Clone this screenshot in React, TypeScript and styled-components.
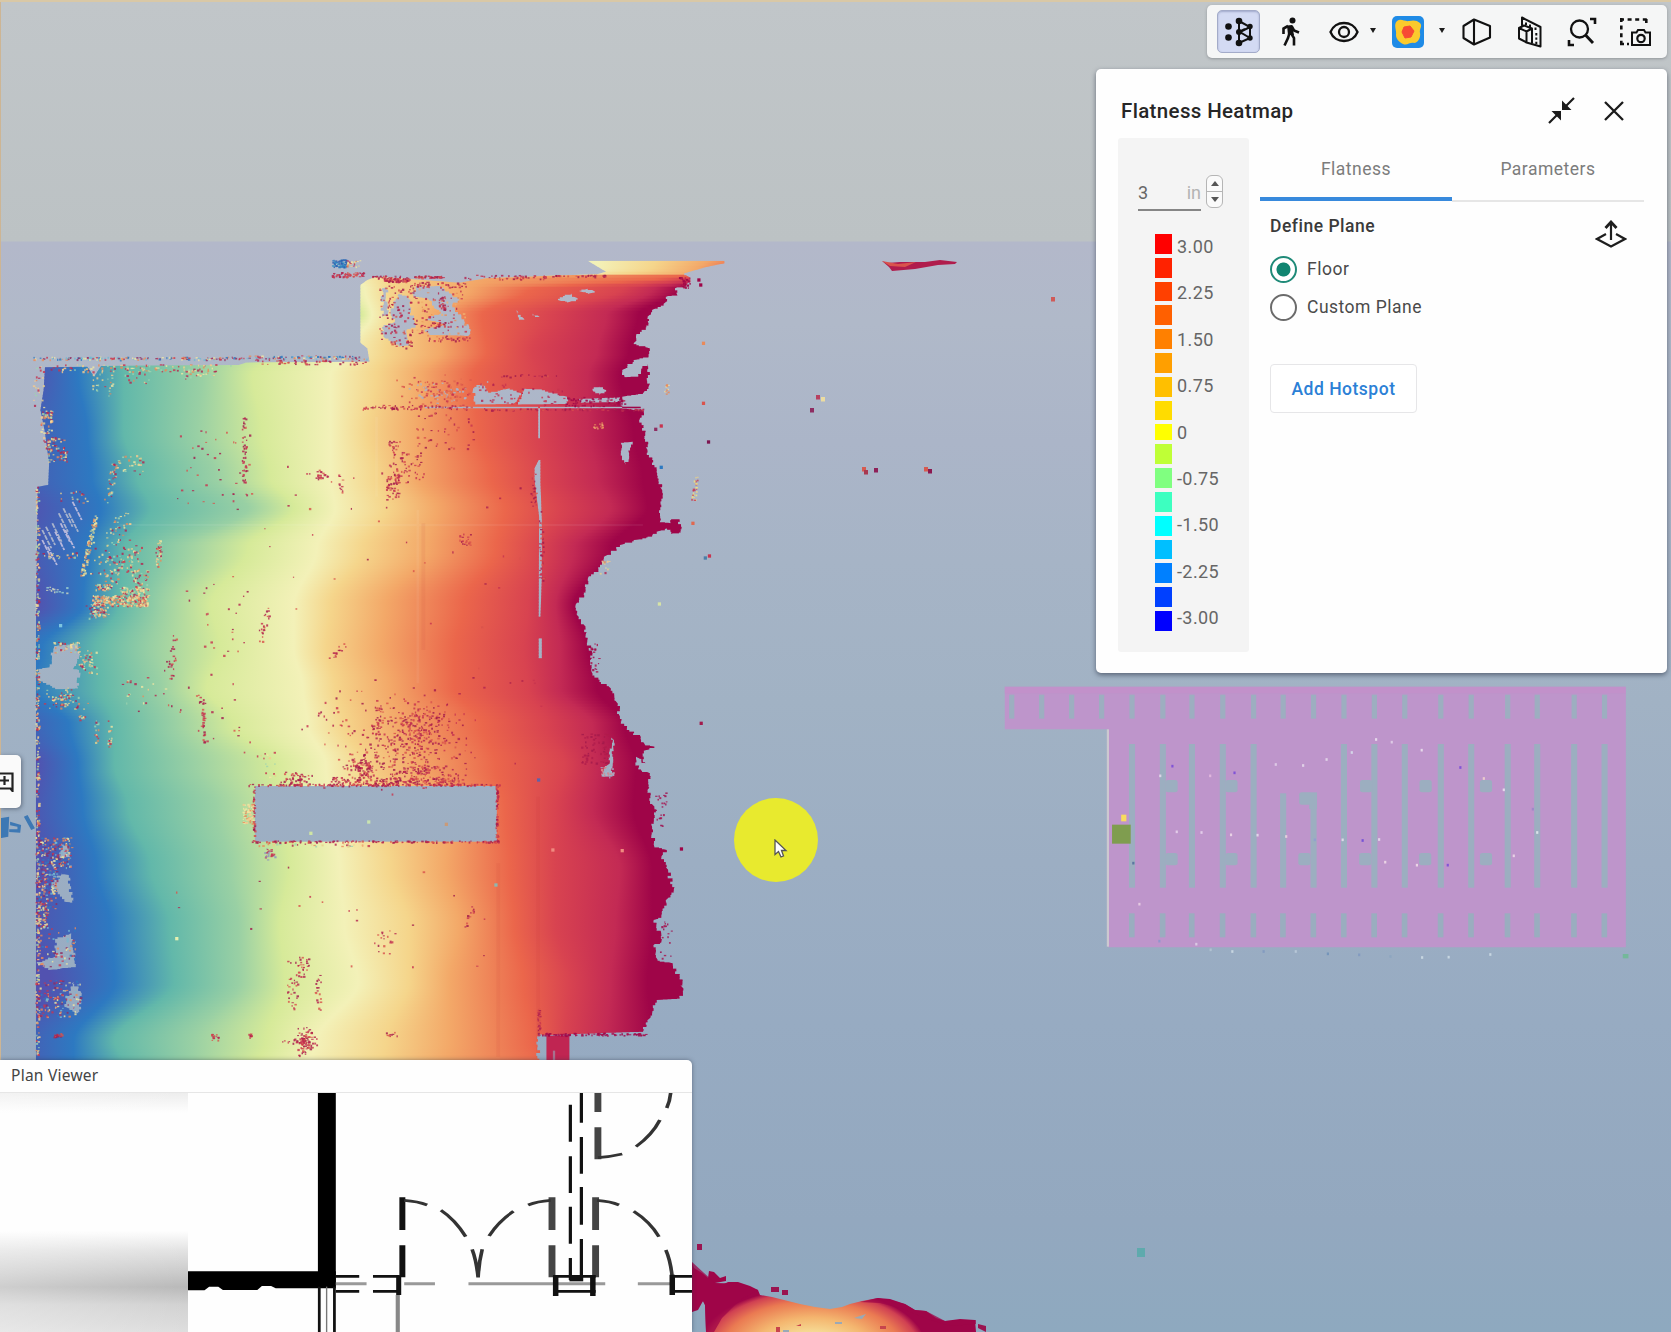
import React from 'react';
import styled, { createGlobalStyle } from 'styled-components';

const GlobalStyle = createGlobalStyle`
  * { box-sizing: border-box; }
  body { margin: 0; overflow: hidden; font-family: Roboto, "Liberation Sans", sans-serif; }
`;

/* ---------- seeded helpers for the scan data ---------- */

type Pt = [number, number];

const seeded = (seed: number) => {
  let s = seed;
  return () => {
    s = (s * 1664525 + 1013904223) % 4294967296;
    return s / 4294967296;
  };
};

const roughen = (pts: Pt[], amount: number, seed: number, from = 0, to = pts.length): string => {
  const r = seeded(seed);
  const out: string[] = [];
  pts.forEach((p, i) => {
    const q = pts[(i + 1) % pts.length];
    out.push(`${p[0]},${p[1]}`);
    if (i < from || i >= to) return;
    const n = Math.floor(Math.hypot(q[0] - p[0], q[1] - p[1]) / 9);
    let lx = p[0];
    for (let k = 1; k <= n; k++) {
      const t = k / (n + 1);
      const x = p[0] + (q[0] - p[0]) * t + (r() - 0.5) * amount;
      const y = p[1] + (q[1] - p[1]) * t;
      out.push(`${lx.toFixed(1)},${y.toFixed(1)}`, `${x.toFixed(1)},${y.toFixed(1)}`);
      lx = x;
    }
  });
  return `M${out.join('L')}Z`;
};

/* ---------- deviation field ---------- */

const RAMP = ['#5252b0', '#2d79c1', '#62b8aa', '#99d0a4', '#d6ea99', '#f3f1b8', '#f5d58b', '#f3a868', '#eb664b', '#d84350', '#c32a54', '#9f0548'];

/* y, then the x at which each colour of the ramp is reached */
const FIELD: number[][] = [
  [85, 500, 560, 620, 680, 740, 1300, 1430, 1540, 1620, 1650, 1680, 1720],
  [112, 500, 560, 620, 680, 740, 1300, 1420, 1520, 1600, 1640, 1680, 1720],
  [126, 500, 560, 620, 680, 740, 1250, 1380, 1510, 1590, 1630, 1660, 1700],
  [138, 500, 560, 620, 680, 740, 780, 850, 1040, 1440, 1500, 1540, 1600],
  [175, 500, 560, 620, 680, 740, 795, 850, 1020, 1150, 1350, 1420, 1480],
  [250, 500, 560, 620, 700, 785, 810, 860, 950, 1050, 1200, 1320, 1390],
  [360, 60, 160, 260, 430, 600, 760, 840, 960, 1060, 1160, 1300, 1370],
  [430, 70, 170, 270, 440, 550, 720, 820, 920, 1030, 1170, 1280, 1350],
  [600, 10, 190, 270, 430, 570, 720, 800, 910, 1040, 1170, 1280, 1380],
  [740, 0, 200, 300, 470, 590, 720, 820, 910, 1070, 1190, 1300, 1400],
  [830, 60, 220, 330, 540, 640, 730, 840, 950, 1100, 1220, 1330, 1410],
  [950, 40, 190, 270, 400, 540, 690, 790, 930, 1080, 1180, 1250, 1330],
  [1120, 80, 180, 260, 350, 460, 640, 720, 840, 1010, 1150, 1210, 1250],
  [1250, -60, 90, 210, 330, 480, 640, 710, 830, 990, 1140, 1220, 1280],
  [1370, -80, 70, 220, 350, 450, 660, 730, 850, 990, 1150, 1220, 1300],
  [1480, 10, 150, 250, 380, 510, 670, 750, 870, 1050, 1190, 1290, 1360],
  [1600, 80, 170, 250, 420, 600, 710, 790, 910, 1080, 1230, 1300, 1385],
  [1730, 60, 180, 280, 470, 620, 720, 820, 980, 1100, 1210, 1290, 1380],
  [1910, 90, 210, 330, 500, 630, 740, 850, 970, 1110, 1210, 1350, 1420],
  [2080, 60, 240, 370, 520, 610, 750, 890, 1000, 1120, 1210, 1340, 1420],
  [2250, 110, 250, 380, 520, 620, 780, 890, 980, 1140, 1240, 1330, 1410],
  [2430, 10, 160, 250, 420, 580, 690, 840, 980, 1160, 1230, 1320, 1420],
  [2500, 20, 160, 270, 420, 560, 670, 830, 970, 1180, 1240, 1320, 1420],
];

const fieldAt = (y: number): number[] => {
  let i = 0;
  while (i < FIELD.length - 2 && FIELD[i + 1][0] < y) i++;
  const a = FIELD[i];
  const b = FIELD[i + 1];
  let t = Math.min(1, Math.max(0, (y - a[0]) / (b[0] - a[0])));
  t = t * t * (3 - 2 * t);
  return a.slice(1).map((v, k) => v + (b[k + 1] - v) * t);
};

const BAND = 9;
const BANDS = Array.from({ length: Math.ceil((2500 - 80) / BAND) }, (_, i) => 80 + i * BAND);

const OUTLINE: Pt[] = [
  [1300, 133], [1320, 125], [1280, 92], [1578, 92], [1578, 100], [1540, 110], [1490, 130], [1502, 142], [1495, 165], [1470, 175], [1475, 195], [1450, 200],
  [1445, 222], [1420, 240], [1410, 260], [1412, 280], [1385, 318], [1380, 340], [1415, 355], [1412, 380], [1380, 390],
  [1355, 420], [1360, 442], [1390, 440], [1410, 400], [1412, 470], [1400, 490], [1355, 500], [1355, 535], [1402, 542],
  [1392, 570], [1405, 610], [1410, 660], [1430, 720], [1442, 780], [1437, 875], [1460, 880], [1462, 868], [1480, 868], [1482, 905],
  [1462, 912], [1450, 893], [1430, 905], [1420, 917], [1380, 930], [1350, 945], [1315, 980], [1303, 1020], [1280, 1045],
  [1275, 1080], [1253, 1125], [1260, 1160], [1275, 1190], [1275, 1215], [1290, 1270], [1285, 1290], [1290, 1330],
  [1330, 1375], [1345, 1420], [1350, 1460], [1365, 1495], [1395, 1520], [1405, 1545], [1425, 1550], [1402, 1562],
  [1405, 1605], [1385, 1580], [1390, 1615], [1415, 1630], [1410, 1680], [1425, 1730], [1420, 1790], [1425, 1850],
  [1452, 1860], [1440, 1880], [1455, 1920], [1467, 1980], [1450, 2010], [1440, 2060], [1423, 2070], [1440, 2110], [1440, 2135],
  [1423, 2145], [1432, 2190], [1465, 2200], [1480, 2240], [1488, 2275], [1480, 2305], [1430, 2310], [1420, 2350], [1410, 2370],
  [1400, 2405], [1180, 2415], [1172, 2410],
  [1172, 2520], [78, 2520], [78, 1230], [82, 770], [105, 765], [107, 700], [97, 600], [88, 540], [95, 480], [98, 412],
  [190, 410], [205, 440], [220, 408], [520, 405], [535, 398], [805, 395], [800, 355], [785, 338], [785, 165], [800, 150], [820, 140], [900, 148], [1000, 158], [1060, 145], [1180, 138],
];

const HOLES: Pt[][] = [
  [[555, 1668], [1082, 1668], [1082, 1835], [555, 1835]],
  [[1030, 480], [1050, 460], [1065, 490], [1110, 475], [1135, 490], [1118, 522], [1035, 524]],
  [[1140, 476], [1180, 478], [1235, 500], [1235, 522], [1128, 524]],
  [[1215, 210], [1245, 190], [1258, 205], [1235, 218]],
  [[1262, 184], [1280, 176], [1295, 184], [1280, 192]],
  [[1125, 240], [1142, 268], [1130, 270]],
  [[1160, 250], [1175, 260], [1165, 262]],
  [[905, 170], [960, 168], [985, 195], [1000, 205], [985, 225], [1005, 260], [1022, 290], [1020, 318], [935, 315], [925, 300], [970, 285], [930, 270], [960, 250], [945, 235], [930, 205], [900, 200]],
  [[850, 250], [870, 190], [890, 200], [895, 240], [905, 290], [885, 300], [890, 345], [868, 350], [835, 320], [832, 295], [860, 275]],
  [[832, 180], [842, 170], [845, 250], [832, 260]],
  [[1290, 480], [1305, 468], [1320, 480], [1305, 495]],
  [[1260, 507], [1350, 502], [1350, 516], [1265, 518]],
  [[1352, 640], [1378, 635], [1370, 670], [1362, 705], [1352, 670]],
  [[925, 530], [1395, 530], [1395, 535], [925, 535]],
  [[1172, 530], [1176, 530], [1176, 625], [1172, 625]],
  [[1173, 690], [1177, 690], [1177, 760], [1180, 870], [1180, 1040], [1177, 1160], [1173, 1160], [1174, 860], [1164, 750], [1164, 715]],
  [[1173, 1225], [1180, 1225], [1180, 1285], [1173, 1285]],
  [[118, 1250], [170, 1240], [172, 1280], [160, 1315], [172, 1320], [170, 1375], [120, 1378], [82, 1350], [84, 1318], [108, 1312]],
  [[1332, 1520], [1337, 1530], [1334, 1640], [1310, 1640], [1328, 1600]],
  [[135, 1930], [150, 1935], [158, 2020], [140, 2015], [112, 1970]],
  [[120, 2130], [155, 2110], [165, 2210], [105, 2220], [80, 2200], [120, 2180]],
  [[160, 2255], [178, 2290], [170, 2355], [140, 2330], [150, 2290]],
  [[135, 1840], [152, 1850], [152, 1880], [130, 1885]],
];

const BODY = [
  roughen(OUTLINE, 9, 7, 6, 94),
  ...HOLES.map((h, i) => (i === 0 || (i > 12 && i < 17) ? `M${h.join('L')}Z` : roughen(h, 8, 31 + i))),
].join(' ');

/* ---------- stray returns ---------- */

const RED = ['#b3234f', '#c8344f', '#a21a4c', '#d9534c'];
const MIX = ['#c8344f', '#f2e7a2', '#e98a5a', '#e9d18a', '#b3234f', '#9fd3b0', '#f6c98d'];
const COOL = ['#2d79c1', '#f2e7a2', '#c8344f', '#74b9d2', '#8e2d62', '#e98a5a'];
const GAP = ['#a9b4cc', '#b8b8dc'];
const WINE = ['#9f0548', '#a90f4a'];

/* n points scattered over a box; k slants the box, soft thins its rim */
interface Cluster { x: number; y: number; w: number; h: number; n: number; c: string[]; k?: number; soft?: boolean }

const CLUSTERS: Cluster[] = [
  { x: 68, y: 380, w: 470, h: 8, n: 150, c: COOL },
  { x: 540, y: 376, w: 258, h: 10, n: 90, c: COOL },
  { x: 540, y: 388, w: 262, h: 14, n: 50, c: RED },
  { x: 110, y: 402, w: 400, h: 22, n: 90, c: MIX },
  { x: 380, y: 415, w: 90, h: 30, n: 30, c: MIX },
  { x: 200, y: 430, w: 45, h: 70, n: 22, c: MIX },
  { x: 270, y: 420, w: 60, h: 40, n: 16, c: MIX },
  { x: 68, y: 400, w: 26, h: 140, n: 22, c: MIX },
  { x: 88, y: 540, w: 24, h: 70, n: 50, c: MIX },
  { x: 92, y: 620, w: 46, h: 75, n: 75, c: MIX, k: 12 },
  { x: 77, y: 770, w: 7, h: 1740, n: 400, c: MIX },
  { x: 722, y: 88, w: 32, h: 22, n: 70, c: ['#2d79c1', '#3c98c4', '#2d5fb0'] },
  { x: 752, y: 90, w: 34, h: 20, n: 26, c: MIX },
  { x: 722, y: 126, w: 70, h: 14, n: 55, c: RED },
  { x: 810, y: 136, w: 80, h: 8, n: 30, c: RED },
  { x: 900, y: 136, w: 68, h: 6, n: 40, c: RED },
  { x: 835, y: 144, w: 55, h: 10, n: 60, c: RED },
  { x: 895, y: 155, w: 120, h: 16, n: 40, c: RED },
  { x: 1010, y: 134, w: 190, h: 14, n: 46, c: RED },
  { x: 1200, y: 134, w: 120, h: 5, n: 30, c: RED },
  { x: 825, y: 160, w: 80, h: 175, n: 90, c: RED },
  { x: 905, y: 165, w: 115, h: 155, n: 90, c: ['#c8344f', '#e98a5a', '#b3234f', '#f0b06e'] },
  { x: 955, y: 200, w: 15, h: 40, n: 25, c: RED },
  { x: 940, y: 276, w: 36, h: 12, n: 20, c: RED },
  { x: 850, y: 330, w: 45, h: 25, n: 18, c: RED },
  { x: 930, y: 316, w: 95, h: 16, n: 26, c: RED },
  { x: 785, y: 524, w: 240, h: 14, n: 75, c: RED },
  { x: 870, y: 440, w: 170, h: 88, n: 130, c: ['#c8344f', '#e0684f', '#d9534c', '#a9b4cc'], soft: true },
  { x: 1040, y: 460, w: 200, h: 66, n: 44, c: ['#c8344f', '#b3234f'] },
  { x: 1080, y: 432, w: 150, h: 8, n: 18, c: RED },
  { x: 1230, y: 500, w: 130, h: 28, n: 70, c: ['#b3234f', '#9f0548'] },
  { x: 1040, y: 535, w: 360, h: 5, n: 70, c: RED },
  { x: 900, y: 545, w: 130, h: 110, n: 40, c: RED },
  { x: 845, y: 630, w: 30, h: 120, n: 40, c: RED },
  { x: 865, y: 650, w: 50, h: 110, n: 36, c: RED, k: 10 },
  { x: 840, y: 730, w: 28, h: 80, n: 50, c: RED },
  { x: 665, y: 718, w: 50, h: 30, n: 22, c: RED },
  { x: 735, y: 730, w: 12, h: 56, n: 9, c: RED },
  { x: 526, y: 560, w: 10, h: 200, n: 46, c: RED },
  { x: 380, y: 600, w: 170, h: 220, n: 36, c: RED },
  { x: 250, y: 675, w: 65, h: 60, n: 28, c: MIX },
  { x: 222, y: 700, w: 16, h: 120, n: 34, c: MIX, k: -20 },
  { x: 172, y: 850, w: 10, h: 190, n: 95, c: ['#f2e7a2', '#c8d79a', '#e98a5a', '#e9d18a'], k: -32 },
  { x: 215, y: 845, w: 40, h: 100, n: 36, c: MIX, k: -40 },
  { x: 200, y: 930, w: 125, h: 140, n: 110, c: MIX, soft: true },
  { x: 338, y: 930, w: 12, h: 80, n: 36, c: MIX },
  { x: 200, y: 1095, w: 120, h: 32, n: 260, c: ['#f2e7a2', '#e98a5a', '#e9d18a', '#f6c98d', '#c8344f'] },
  { x: 205, y: 1060, w: 40, h: 18, n: 40, c: MIX },
  { x: 260, y: 1070, w: 62, h: 26, n: 70, c: MIX },
  { x: 290, y: 1020, w: 34, h: 60, n: 30, c: MIX },
  { x: 190, y: 1122, w: 50, h: 40, n: 60, c: MIX, soft: true },
  { x: 130, y: 780, w: 60, h: 40, n: 18, c: MIX },
  { x: 90, y: 965, w: 80, h: 20, n: 22, c: MIX },
  { x: 100, y: 1070, w: 45, h: 20, n: 14, c: ['#9fd3d0', '#d0d8c0'] },
  { x: 115, y: 1235, w: 58, h: 32, n: 46, c: MIX },
  { x: 170, y: 1260, w: 40, h: 70, n: 40, c: MIX },
  { x: 85, y: 1375, w: 90, h: 60, n: 70, c: MIX, k: 15, soft: true },
  { x: 165, y: 1455, w: 25, h: 16, n: 12, c: MIX },
  { x: 205, y: 1470, w: 8, h: 70, n: 16, c: MIX },
  { x: 234, y: 1470, w: 8, h: 80, n: 16, c: MIX },
  { x: 260, y: 1350, w: 100, h: 70, n: 18, c: MIX },
  { x: 350, y: 1200, w: 25, h: 150, n: 26, c: RED, k: -28 },
  { x: 432, y: 1400, w: 10, h: 140, n: 30, c: RED, k: 8 },
  { x: 360, y: 1340, w: 160, h: 190, n: 22, c: RED },
  { x: 555, y: 1140, w: 14, h: 100, n: 22, c: RED, k: -20 },
  { x: 440, y: 1080, w: 100, h: 200, n: 18, c: RED },
  { x: 700, y: 1225, w: 20, h: 70, n: 14, c: RED, k: -50 },
  { x: 640, y: 1380, w: 150, h: 110, n: 18, c: RED },
  { x: 740, y: 1440, w: 270, h: 240, n: 260, c: RED, soft: true },
  { x: 840, y: 1390, w: 150, h: 190, n: 170, c: RED, soft: true },
  { x: 755, y: 1570, w: 60, h: 85, n: 90, c: RED, soft: true },
  { x: 850, y: 1590, w: 160, h: 75, n: 90, c: RED, soft: true },
  { x: 806, y: 1430, w: 16, h: 90, n: 26, c: RED, k: -10 },
  { x: 720, y: 1640, w: 290, h: 26, n: 180, c: RED },
  { x: 615, y: 1625, w: 60, h: 40, n: 46, c: RED, soft: true },
  { x: 540, y: 1661, w: 550, h: 5, n: 130, c: RED },
  { x: 550, y: 1665, w: 4, h: 170, n: 40, c: RED },
  { x: 1079, y: 1665, w: 4, h: 170, n: 60, c: RED },
  { x: 545, y: 1831, w: 540, h: 5, n: 120, c: RED },
  { x: 545, y: 1840, w: 270, h: 8, n: 30, c: MIX },
  { x: 528, y: 1720, w: 22, h: 60, n: 60, c: ['#f6c98d', '#f2e7a2', '#e98a5a'] },
  { x: 572, y: 1850, w: 26, h: 35, n: 26, c: ['#c8344f', '#8d92c0'], soft: true },
  { x: 555, y: 1550, w: 45, h: 90, n: 14, c: MIX },
  { x: 82, y: 1822, w: 73, h: 90, n: 150, c: COOL },
  { x: 82, y: 1910, w: 45, h: 130, n: 130, c: COOL },
  { x: 82, y: 2030, w: 20, h: 60, n: 46, c: MIX },
  { x: 84, y: 2090, w: 80, h: 120, n: 60, c: COOL },
  { x: 84, y: 2250, w: 90, h: 110, n: 120, c: COOL },
  { x: 115, y: 2410, w: 20, h: 10, n: 16, c: RED },
  { x: 625, y: 2190, w: 24, h: 150, n: 30, c: RED },
  { x: 685, y: 2230, w: 14, h: 110, n: 18, c: RED },
  { x: 648, y: 2180, w: 24, h: 60, n: 26, c: RED },
  { x: 645, y: 2395, w: 40, h: 80, n: 90, c: RED, soft: true },
  { x: 612, y: 2425, w: 70, h: 14, n: 20, c: RED },
  { x: 457, y: 2410, w: 18, h: 20, n: 14, c: RED },
  { x: 540, y: 2410, w: 10, h: 12, n: 10, c: RED },
  { x: 815, y: 2100, w: 45, h: 80, n: 16, c: RED },
  { x: 840, y: 2405, w: 26, h: 14, n: 9, c: RED },
  { x: 1005, y: 2020, w: 10, h: 70, n: 12, c: RED, k: -24 },
  { x: 1000, y: 905, w: 24, h: 40, n: 20, c: RED },
  { x: 1155, y: 730, w: 12, h: 100, n: 26, c: RED },
  { x: 1173, y: 830, w: 10, h: 220, n: 40, c: RED },
  { x: 1265, y: 1510, w: 60, h: 90, n: 60, c: ['#b01c4c', '#a21a4c'] },
  { x: 1305, y: 1610, w: 30, h: 30, n: 26, c: ['#a9b4cc', '#d8858a'] },
  { x: 1290, y: 575, w: 22, h: 22, n: 14, c: ['#e98a5a', '#f0b06e'] },
  { x: 1170, y: 2335, w: 5, h: 80, n: 36, c: RED },
  { x: 1180, y: 2408, w: 225, h: 7, n: 80, c: WINE },
  { x: 1425, y: 1680, w: 26, h: 110, n: 20, c: WINE },
  { x: 1425, y: 2070, w: 42, h: 130, n: 18, c: WINE },
  { x: 1285, y: 1235, w: 20, h: 90, n: 18, c: WINE },
  { x: 1505, y: 740, w: 8, h: 70, n: 24, c: ['#f2e37f', '#c8344f', '#e9d18a'], k: -6 },
  { x: 1446, y: 458, w: 8, h: 34, n: 12, c: ['#f2e7a2', '#e98a5a'] },
  { x: 1305, y: 990, w: 20, h: 40, n: 12, c: MIX },
  { x: 1478, y: 138, w: 24, h: 34, n: 30, c: WINE },
  { x: 200, y: 1300, w: 1000, h: 340, n: 30, c: RED },
  { x: 350, y: 640, w: 800, h: 560, n: 44, c: RED },
  { x: 350, y: 1880, w: 800, h: 380, n: 22, c: RED },
];

/* single echoes in empty space: x, y, colour */
const ECHOES: [number, number, string][] = [
  [1532, 340, '#e98a5a'], [1532, 520, '#d9534c'], [1543, 636, '#7d1650'], [1440, 588, '#c8344f'], [1428, 598, '#8e2d62'],
  [1440, 712, '#2d79c1'], [1509, 880, '#e0684f'], [1545, 978, '#c8344f'], [1536, 984, '#4b7fa8'], [1527, 1480, '#a21a4c'],
  [1436, 1122, '#d6e3a6'], [1484, 1857, '#9f0548'], [1526, 165, '#9f0548'], [1522, 150, '#9f0548'], [803, 1776, '#c9e3b0'],
  [677, 1810, '#cfe5a4'], [972, 1783, '#c99a78'], [1173, 1650, '#5f62a8'], [1080, 1965, '#8fb7b0'], [1204, 1860, '#f08a80'],
  [1355, 1862, '#f08a80'], [385, 2126, '#e6f0b0'], [132, 1187, '#7cc4e0'],
];

const r0 = seeded(99);
const spread = (soft?: boolean) => (soft ? (r0() + r0() + r0()) / 3 * 1.4 - 0.2 : r0());

const SPECKS = CLUSTERS.map(cl =>
  Array.from({ length: cl.n }, () => {
    const k = cl.k ?? 0;
    const ty = spread(cl.soft);
    const slant = k < 0 ? -k * (1 - ty) : k * ty;
    return {
      x: cl.x + spread(cl.soft) * cl.w + slant,
      y: cl.y + ty * cl.h,
      w: 2.6 + r0() * 3,
      h: 3 + r0() * 3.8,
      f: cl.c[Math.floor(r0() * cl.c.length)],
    };
  }),
).flat();

const DECK: Pt[] = [
  [692, 1262], [694, 1268], [702, 1273], [708, 1278], [709, 1271], [714, 1272], [720, 1278], [726, 1276], [726, 1281], [715, 1283], [724, 1284],
  [728, 1282], [738, 1282], [750, 1286], [758, 1290], [760, 1295], [772, 1297], [788, 1301], [800, 1304], [815, 1307], [830, 1309],
  [842, 1307], [850, 1304], [862, 1301], [878, 1298], [890, 1299], [905, 1304], [915, 1310], [926, 1311], [936, 1318], [945, 1321],
  [960, 1319], [975, 1320], [976, 1332], [706, 1332], [705, 1305], [703, 1301], [698, 1310], [692, 1312],
];

const ScanLayer = styled.svg`
  position: absolute;
  inset: 0;
  width: 1671px;
  height: 1332px;
`;

const HATCH: Pt[] = [[92, 900], [92, 930], [100, 890], [104, 950], [114, 880], [120, 905], [128, 850], [132, 880], [138, 835], [142, 900], [150, 850], [158, 815]];

const AISLES = [327, 398, 465, 536, 607, 675, 745, 815, 885, 955, 1038, 1108, 1192, 1260, 1345, 1415];
const STUBS = [50, 119, 188, 257];
const KNOBS: Pt[] = [[418, 348], [556, 348], [866, 348], [1003, 348], [1142, 348], [726, 385], [418, 567], [556, 567], [724, 567], [864, 567], [1002, 567], [1142, 567]];
const DOTS: [number, number, string][] = [
  [420, 289, '#7748d8'], [563, 309, '#7748d8'], [1083, 293, '#7748d8'], [858, 512, '#6a48d8'], [1054, 586, '#7748d8'], [330, 580, '#4f6f9a'],
  [392, 318, '#e6dcec'], [507, 318, '#e6bce0'], [658, 284, '#e3d2ea'], [721, 287, '#e6dcec'], [775, 269, '#e6dcec'], [833, 248, '#d8e0ec'],
  [889, 209, '#ece4f0'], [925, 217, '#e3d2ea'], [994, 241, '#ece4f0'], [1137, 326, '#f3d6cc'], [1183, 360, '#ece4f0'], [1250, 418, '#9b85c8'],
  [1260, 488, '#e6ecf0'], [430, 486, '#e9d6ee'], [487, 488, '#e9d6ee'], [555, 495, '#f0dcea'], [616, 496, '#e9e0ee'], [682, 500, '#f0d8e0'],
  [748, 510, '#8f9fd0'], [812, 510, '#e9e0ee'], [896, 509, '#e9e0ee'], [910, 577, '#f3dfea'], [983, 586, '#f3dfea'], [1206, 558, '#f0dcea'],
  [344, 703, '#ecd2e6'], [390, 814, '#8b96cc'], [475, 823, '#dfd2e8'], [558, 845, '#cfdde6'], [508, 840, '#b5c5d4'], [630, 845, '#7f98c0'],
  [704, 845, '#bccbda'], [778, 852, '#6f90b8'], [850, 855, '#7f98c0'], [922, 860, '#8ba4c0'], [995, 863, '#cfdde6'], [1056, 862, '#cfdde6'],
  [1152, 854, '#cfdde6'],
];

/* far returns on the right of the slab, in screen pixels */
const FAR: [number, number, string][] = [
  [1053, 299, '#d05a58'], [818, 397, '#b84060'], [823, 399, '#ecdca0'], [812, 410, '#8e2d62'], [864, 469, '#d65a50'],
  [866, 472, '#a83850'], [876, 470, '#8e2058'], [926, 469, '#d65a50'], [930, 471, '#8b1850'],
];

const PointCloud = () => (
  <ScanLayer viewBox="0 0 1671 1332">
    <defs>
      <clipPath id="slab">
        <path d={BODY} clipRule="evenodd" />
      </clipPath>
      {BANDS.map(y => (
        <linearGradient key={y} id={`b${y}`} gradientUnits="userSpaceOnUse" x1="-100" x2="1700" y1="0" y2="0">
          {fieldAt(y).map((x, i) => (
            <stop key={i} offset={(x + 100) / 1800} stopColor={RAMP[i]} />
          ))}
        </linearGradient>
      ))}
      <radialGradient id="deck" gradientUnits="userSpaceOnUse" cx="812" cy="1350" r="100" gradientTransform="translate(812 1350) scale(1.15 .62) translate(-812 -1350)">
        <stop offset=".25" stopColor="#f6e09a" />
        <stop offset=".52" stopColor="#f4b66f" />
        <stop offset=".78" stopColor="#ea7a52" />
        <stop offset=".93" stopColor="#d04052" />
        <stop offset="1" stopColor="#9f0548" />
      </radialGradient>
    </defs>
    <g transform="translate(0 230) scale(.4592 .33333)">
      <g clipPath="url(#slab)">
        {BANDS.map(y => (
          <rect key={y} x="70" y={y} width="1530" height={BAND + 3} fill={`url(#b${y})`} />
        ))}
        <path d="M260 885H1400M910 840V1360M820 560V800" stroke="#fff" strokeOpacity=".06" strokeWidth="6" />
        <path d="M922 880V1260M1085 1900V2480M1172 1700V2480" stroke="#c03030" strokeOpacity=".08" strokeWidth="8" />
      </g>
      <rect x="1190" y="2417" width="50" height="100" fill="#c02552" />
      <rect x="1204" y="2462" width="5" height="40" fill="#a8728f" />
      {HATCH.map(([x, y], i) => (
        <path key={i} d={`M${x} ${y}l20 55`} stroke={GAP[i % 2]} strokeWidth="4" strokeDasharray="14 3" />
      ))}
      {SPECKS.map((s, i) => (
        <rect key={i} x={s.x} y={s.y} width={s.w} height={s.h} fill={s.f} fillOpacity=".82" />
      ))}
      {ECHOES.map(([x, y, f], i) => (
        <rect key={i} x={x - 3.5} y={y - 5} width="7" height="10" fill={f} />
      ))}
      <path d="M0 1765L20 1760L18 1820L0 1825ZM22 1775L46 1785L44 1808L20 1806L20 1798L38 1798L38 1790L22 1786ZM52 1760L60 1755L76 1795L68 1800Z" fill="#3d78b4" />
    </g>
    <path d="M882 261L887 263L900 262L925 262L940 260L957 262L955 264L938 265L915 269L892 271L889 267Z" fill="#b01c4c" />
    <path d="M882 261L898 264L916 262L905 267L890 266Z" fill="#d9534c" />
    {FAR.map(([x, y, f]) => (
      <rect key={`${x}-${y}`} x={x - 2} y={y - 2} width="4" height="4.5" fill={f} />
    ))}

    <g transform="translate(990 670) scale(.43431 .33333)">
      <path d="M34 50H1464V832H272V178H34Z" fill="#be95cb" />
      <path d="M34 50H1464V70H34Z" fill="#c58fca" opacity=".6" />
      <rect x="269" y="178" width="5" height="652" fill="#cdc8d0" />
      {[...STUBS, ...AISLES].map(x => <rect key={x} x={x - 6} y="74" width="12" height="72" fill="#9daec0" />)}
      {AISLES.map(x => {
        const top = x === 675 || x === 745 ? 370 : 222;
        return <rect key={x} x={x - 7} y={top} width="14" height={653 - top} fill="#9caec0" />;
      })}
      {AISLES.map(x => <rect key={x} x={x - 7} y="730" width="13" height="72" fill="#9aadbf" />)}
      {KNOBS.map(([x, y]) => <rect key={`${x}-${y}`} x={x - 14} y={y - 18} width="28" height="37" rx="6" fill="#9caec0" />)}
      <rect x="735" y="367" width="18" height="50" fill="#9caec0" />
      {DOTS.map(([x, y, f], i) => <rect key={i} x={x - 2.5} y={y - 4.5} width="5" height="8" fill={f} opacity=".85" />)}
      <rect x="302" y="434" width="12" height="20" fill="#f8dc5e" />
      <rect x="281" y="464" width="43" height="57" fill="#7f9d4f" />
      <rect x="1457" y="852" width="13" height="13" fill="#74b89a" />
    </g>

    <path d={`M${DECK.join('L')}Z`} fill="url(#deck)" />
    <path d="M692 1262L715 1283L736 1283L758 1290L740 1300L722 1318L714 1332H706L705 1305L703 1301L692 1312ZM860 1302L878 1298L905 1304L915 1310L926 1311L945 1321L976 1320V1324L950 1326L925 1318L900 1308L880 1303Z" fill="#9f0548" opacity=".75" />
    <path d="M697 1244h5v6h-5zM771 1287h8v5h-8zM782 1290h6v5h-6zM978 1324l8 2v6l-8-4z" fill="#9a1450" />
    <path d="M854 1318l12-4-4 5zM835 1322h7v2h-7zM783 1330h6v2h-6z" fill="#9aa9b6" />
    <path d="M776 1327h4v5h-4zM796 1326l5-2v2zM880 1326h6v3h-6z" fill="#c8444c" />
    <rect x="1137" y="1248" width="8" height="9" fill="#5faaad" />
  </ScanLayer>
);

/* ---------- viewport ---------- */

const Viewport = styled.main`
  position: relative;
  width: 1671px;
  height: 1332px;
  overflow: hidden;
  border-top: 2px solid #d9c8a6;
  background: linear-gradient(
    180deg,
    #c1c6c9 0, #bcc2c4 239px, #b3b8ca 240px, #b0b9c9 320px, #abb5c8 440px,
    #a6b4c6 560px, #a1b2c4 700px, #9caec3 860px, #97abc2 1020px, #93a8bf 1220px, #8ea9bf 1330px
  );
`;

const EdgeLine = styled.i`
  position: absolute;
  left: 0;
  top: 0;
  width: 1px;
  height: 1060px;
  background: #cdb594;
`;

const CloudShift = styled.div`
  position: absolute;
  inset: -2px 0 0 0;
`;

const Dock = styled.aside`
  position: absolute;
  top: 3px;
  right: 4px;
  display: flex;
  flex-direction: column;
  align-items: flex-end;
  gap: 11px;
`;

/* ---------- toolbar ---------- */

const Toolbar = styled.div`
  display: flex;
  align-items: center;
  width: 460px;
  height: 53px;
  padding-left: 10px;
  border-radius: 5px;
  background: #f5f6f6;
  box-shadow: 0 1px 3px rgba(60, 64, 68, 0.35);
`;

const ToolButton = styled.button<{ $w: number; $active?: boolean }>`
  display: flex;
  align-items: center;
  justify-content: center;
  flex: none;
  width: ${p => p.$w}px;
  height: 43px;
  padding: 0;
  border: 1.5px solid ${p => (p.$active ? '#a3abc9' : 'transparent')};
  border-radius: 5px;
  background: ${p => (p.$active ? '#d3daf3' : 'transparent')};
  box-shadow: ${p => (p.$active ? 'inset 0 1px 2px rgba(70, 80, 130, 0.35)' : 'none')};
  color: #111;
`;

const Caret = styled.i<{ $ml?: number }>`
  flex: none;
  width: 0;
  height: 0;
  margin-bottom: 3px;
  margin-left: ${p => p.$ml ?? 0}px;
  border: 3px solid transparent;
  border-top: 5px solid #1c1c1c;
  border-bottom: 0;
`;

const Glyph = styled.svg`
  display: block;
  flex: none;
  fill: none;
  stroke: currentColor;
`;

/* ---------- heatmap panel ---------- */

const Panel = styled.section`
  width: 571px;
  height: 604px;
  padding: 0 23px 0 22px;
  border-radius: 5px;
  background: #fefefe;
  box-shadow: 0 2px 5px rgba(40, 48, 66, 0.6);
`;

const PanelHeader = styled.header`
  display: flex;
  align-items: center;
  height: 69px;
  padding: 14px 20px 0 3px;
`;

const PanelTitle = styled.h2`
  flex: 1;
  margin: 0;
  font-size: 20.5px;
  font-weight: 500;
  letter-spacing: 0.35px;
  color: #262626;
`;

const IconButton = styled.button<{ $ml?: number }>`
  padding: 0;
  margin: 0 0 0 ${p => p.$ml ?? 0}px;
  border: 0;
  background: none;
  color: #1b1b1b;
`;

const PanelBody = styled.div`
  display: flex;
  gap: 11px;
`;

const Legend = styled.div`
  width: 131px;
  height: 514px;
  padding: 37px 0 0 20px;
  border-radius: 3px;
  background: #f4f4f4;
  color: #666;
`;

const RangeRow = styled.div`
  display: flex;
  align-items: flex-start;
  gap: 5px;
  height: 59px;
`;

const RangeField = styled.div`
  display: flex;
  justify-content: space-between;
  align-items: center;
  width: 63px;
  height: 36px;
  border-bottom: 2px solid #858585;
  font-size: 18px;
`;

const Unit = styled.span`
  color: #b3b3b3;
`;

const Stepper = styled.div`
  display: flex;
  flex-direction: column;
  width: 17px;
  height: 33px;
  border: 1.4px solid #b5b5b5;
  border-radius: 6px;
  background: #fafafa;
`;

const Step = styled.span<{ $down?: boolean }>`
  flex: 1;
  display: flex;
  align-items: center;
  justify-content: center;
  border-top: ${p => (p.$down ? '1px solid #b5b5b5' : '0')};
  &::before {
    content: '';
    border: 4.5px solid transparent;
    border-${p => (p.$down ? 'top' : 'bottom')}: 5px solid #555;
    border-${p => (p.$down ? 'bottom' : 'top')}: 0;
  }
`;

const Scale = styled.div`
  display: flex;
  gap: 5px;
  padding-left: 17px;
`;

const Swatches = styled.div`
  display: flex;
  flex-direction: column;
  gap: 4px;
  width: 17px;
`;

const Swatch = styled.i<{ $c: string; $mid?: boolean }>`
  height: ${p => (p.$mid ? 16 : 19.8)}px;
  background: ${p => p.$c};
`;

const Ticks = styled.div`
  display: flex;
  flex-direction: column;
  padding-top: 2px;
`;

const Tick = styled.span`
  height: 46.4px;
  line-height: 21px;
  font-size: 18px;
  letter-spacing: 0.4px;
`;

const Content = styled.div`
  flex: 1;
  color: #4a4a4a;
`;

const TabRow = styled.div`
  display: flex;
  width: 384px;
  height: 64px;
`;

const Tab = styled.div<{ $on?: boolean }>`
  flex: 1;
  display: flex;
  justify-content: center;
  padding-top: 20px;
  font-size: 17.5px;
  line-height: 22px;
  letter-spacing: 0.5px;
  color: #7c7c7c;
  background: ${p => (p.$on ? 'linear-gradient(#3789dc, #3789dc) 0 59px / 100% 4px no-repeat' : 'linear-gradient(#e6e6e6, #e6e6e6) 0 62px / 100% 2px no-repeat')};
`;

const Section = styled.div`
  display: flex;
  justify-content: space-between;
  align-items: flex-start;
  padding: 13px 17px 0 10px;
  height: 48px;
`;

const SectionTitle = styled.h3`
  margin: 0;
  font-size: 17.5px;
  line-height: 22px;
  font-weight: 500;
  letter-spacing: 0.5px;
  color: #3a3a3a;
`;

const Option = styled.label`
  display: flex;
  align-items: center;
  gap: 10px;
  height: 38px;
  padding-left: 10px;
  font-size: 17.5px;
  letter-spacing: 0.5px;
`;

const Dot = styled.i<{ $on?: boolean }>`
  width: 27px;
  height: 27px;
  border-radius: 50%;
  border: 2.5px solid ${p => (p.$on ? '#1f8a78' : '#6b6b6b')};
  background: ${p => (p.$on ? 'radial-gradient(circle, #118571 6.6px, #fff 7.4px)' : '#fff')};
`;

const HotspotButton = styled.button`
  display: block;
  width: 147px;
  height: 49px;
  margin: 38px 0 0 10px;
  border: 1px solid #e6e6e8;
  border-radius: 4px;
  background: #fff;
  font: 500 17.5px Roboto, sans-serif;
  letter-spacing: 0.5px;
  color: #2b80d6;
`;

const LiftIcon = styled(Glyph)`
  margin-top: 5px;
  color: #1e1e1e;
`;

const SWATCHES = ['#ff0000', '#ff2200', '#ff4000', '#ff6000', '#ff8000', '#ff9f00', '#ffbf00', '#ffdc00', '#ffff00', '#bfff36', '#80ff80', '#3dffc0', '#00ffff', '#00bfff', '#0080ff', '#0040ff', '#0000ff'];
const TICKS = ['3.00', '2.25', '1.50', '0.75', '0', '-0.75', '-1.50', '-2.25', '-3.00'];

/* ---------- side tab, plan viewer, pointer ---------- */

const SideTab = styled.button`
  position: absolute;
  left: 0;
  top: 753px;
  width: 21px;
  height: 53px;
  padding: 0;
  border: 0;
  border-radius: 0 5px 5px 0;
  background: #fafafa;
  box-shadow: 1px 1px 4px rgba(40, 48, 66, 0.5);
  color: #222;
`;

const PlanWindow = styled.section`
  position: absolute;
  left: 0;
  bottom: 0;
  width: 692px;
  height: 272px;
  border-radius: 0 5px 0 0;
  overflow: hidden;
  background: #fefefe;
  box-shadow: 0 0 4px rgba(40, 48, 66, 0.5);
`;

const PlanTitle = styled.header`
  height: 33px;
  padding-left: 11px;
  line-height: 31px;
  border-bottom: 1px solid #e6e6e6;
  font-family: "Noto Sans", sans-serif;
  font-size: 15.5px;
  letter-spacing: 0.25px;
  color: #444;
`;

const PlanRow = styled.div`
  display: flex;
  height: 239px;
`;

const PlanFade = styled.div`
  width: 188px;
  background:
    linear-gradient(90deg, rgba(255, 255, 255, 0.3), transparent),
    linear-gradient(180deg, #ededed 0, #fbfbfb 16px, #fefefe 20px, #fefefe 138px, #e2e2e2 158px, #cccccc 178px, #b9b9b9 194px, #d2d2d2 212px, #dedede 239px);
`;

const PlanDrawing = styled.svg`
  display: block;
  width: 504px;
  height: 239px;
  filter: blur(0.6px);
`;

const Pointer = styled.div`
  position: absolute;
  left: 734px;
  top: 796px;
  width: 84px;
  height: 84px;
  padding: 41px 0 0 40px;
  border-radius: 50%;
  background: #e8ea2e;
`;

export default function App() {
  return (
    <>
      <GlobalStyle />
      <Viewport>
        <CloudShift><PointCloud /></CloudShift>
        <EdgeLine />

        <Dock>
          <Toolbar>
            <ToolButton $w={43} $active>
              <Glyph width="30" height="30" viewBox="0 0 30 30" strokeWidth="2">
                <path d="M15 4L26 10V21L15 26ZM15 4V26M26 10L16 15L26 21M15 15L21 12" />
                <g fill="#111" stroke="none">
                  <circle cx="15" cy="4" r="3.3" /><circle cx="15" cy="15" r="3" /><circle cx="15" cy="26" r="3.3" />
                  <circle cx="26" cy="9.5" r="2.7" /><circle cx="26" cy="21" r="2.7" /><circle cx="4.5" cy="9.5" r="3.3" /><circle cx="4.5" cy="20.5" r="3.3" />
                </g>
              </Glyph>
            </ToolButton>
            <ToolButton $w={62}>
              <Glyph width="22" height="30" viewBox="0 0 22 30" strokeWidth="2.6">
                <circle cx="12.5" cy="3.5" r="3" fill="#111" stroke="none" />
                <path d="M7 8.5L12 8L14 18H8Z" fill="#111" stroke="none" />
                <path d="M8 9L3.5 11.5V17M11.5 9L14 13.5L19 15.5M9.5 16L8 21L4.5 28.5M11.5 17L14 21V28.5" />
              </Glyph>
            </ToolButton>
            <ToolButton $w={43}>
              <Glyph width="30" height="22" viewBox="0 0 30 22" strokeWidth="2.3">
                <path d="M1.5 11C6 -1 24 -1 28.5 11C24 23 6 23 1.5 11Z" /><circle cx="15" cy="11" r="5" />
              </Glyph>
            </ToolButton>
            <Caret $ml={5} />
            <ToolButton $w={63}>
              <Glyph width="32" height="32" viewBox="0 0 32 32">
                <rect width="32" height="32" rx="5" fill="#1f8be6" stroke="none" />
                <path d="M5 5C9 2 13 6 17 5C21 4 25 4 28 7C31 10 27 13 28 17C29 21 26 27 22 27C18 26 15 30 11 28C7 26 4 23 4 19C5 14 1 9 5 5Z" fill="#fbca2d" stroke="none" />
                <path d="M12 11L18 10L22 15L19 21L13 22L10 16Z" fill="#f74a34" stroke="#f74a34" strokeLinejoin="round" />
              </Glyph>
            </ToolButton>
            <Caret />
            <ToolButton $w={63}>
              <Glyph width="30" height="28" viewBox="0 0 30 28" strokeWidth="2.1" strokeLinejoin="round">
                <path d="M12 1.5L28 8V19.5L12 26.5L1.5 20V8ZM12 1.5V26.5" />
              </Glyph>
            </ToolButton>
            <ToolButton $w={42}>
              <Glyph width="25" height="32" viewBox="0 0 25 32" strokeWidth="2" strokeLinejoin="round">
                <path d="M5 9.5V1.5L23.5 11V30.5L9.5 26.5L2 22.5V12L7 9.5L15 12.5V27M2 12L9.5 15.5L15 12.5M9.5 15.5V26.5" />
                <path d="M9 6.5v3M13 8.5v3M18.5 11.5v3M19.3 17v12" strokeDasharray="2.4 2" />
              </Glyph>
            </ToolButton>
            <ToolButton $w={63}>
              <Glyph width="30" height="30" viewBox="0 0 30 30" strokeWidth="2.3">
                <circle cx="12.5" cy="12" r="8.5" /><path d="M18.5 18L26 26" strokeWidth="2.9" />
                <path d="M23 2H28V7M2 23V28H7" strokeWidth="2.6" />
              </Glyph>
            </ToolButton>
            <ToolButton $w={43}>
              <Glyph width="32" height="30" viewBox="0 0 32 30" strokeWidth="2.6">
                <path d="M1 2.5H28" strokeDasharray="4 3.6" /><path d="M2.3 1V28M27.3 2V8" strokeDasharray="4 3.6" /><path d="M1 27H10" strokeDasharray="4 3" />
                <path d="M13 15.5H17.5L19 13H25L26.5 15.5H31V28H13Z" strokeWidth="2" /><circle cx="22" cy="21.5" r="3.7" strokeWidth="2.2" />
              </Glyph>
            </ToolButton>
          </Toolbar>

          <Panel>
            <PanelHeader>
              <PanelTitle>Flatness Heatmap</PanelTitle>
              <IconButton>
                <Glyph width="27" height="27" viewBox="0 0 27 27" strokeWidth="2.2">
                  <path d="M26 1L17 10M1 26L10 17" />
                  <path d="M14 3.5V13H23.5ZM13 23.5V14H3.5Z" fill="#1b1b1b" stroke="none" />
                </Glyph>
              </IconButton>
              <IconButton $ml={29}>
                <Glyph width="20" height="20" viewBox="0 0 20 20" strokeWidth="2.3"><path d="M1 1L19 19M19 1L1 19" /></Glyph>
              </IconButton>
            </PanelHeader>
            <PanelBody>
              <Legend>
                <RangeRow>
                  <RangeField><span>3</span><Unit>in</Unit></RangeField>
                  <Stepper><Step /><Step $down /></Stepper>
                </RangeRow>
                <Scale>
                  <Swatches>{SWATCHES.map((c, i) => <Swatch key={c} $c={c} $mid={i === 8} />)}</Swatches>
                  <Ticks>{TICKS.map(t => <Tick key={t}>{t}</Tick>)}</Ticks>
                </Scale>
              </Legend>
              <Content>
                <TabRow>
                  <Tab $on>Flatness</Tab>
                  <Tab>Parameters</Tab>
                </TabRow>
                <Section>
                  <SectionTitle>Define Plane</SectionTitle>
                  <LiftIcon width="32" height="28" viewBox="0 0 32 28" strokeWidth="2.2">
                    <path d="M11 14L2 19L16 26.5L30 19L21 14M16 20V3" /><path d="M10.5 8L16 2L21.5 8" strokeWidth="2.8" />
                  </LiftIcon>
                </Section>
                <Option><Dot $on />Floor</Option>
                <Option><Dot />Custom Plane</Option>
                <HotspotButton>Add Hotspot</HotspotButton>
              </Content>
            </PanelBody>
          </Panel>
        </Dock>

        <SideTab>
          <Glyph width="15" height="20" viewBox="0 0 15 20" strokeWidth="2.2">
            <path d="M0 1.5H12.5V19L10.5 16.5H0M4.5 4V13M0 8.5H9" />
          </Glyph>
        </SideTab>

        <PlanWindow>
          <PlanTitle>Plan Viewer</PlanTitle>
          <PlanRow>
            <PlanFade />
            <PlanDrawing viewBox="409 159 1098 717" preserveAspectRatio="none" fill="none" stroke="#111">
              <rect x="692" y="150" width="39" height="590" fill="#000" stroke="none" />
              <path d="M400 694H731V745H600L590 738H570L560 750H485L475 740H455L445 751H400Z" fill="#000" stroke="none" />
              <path d="M695 740V880M728 740V880" strokeWidth="6" /><path d="M711 740V880" strokeWidth="3" stroke="#777" />
              <path d="M731 709H782M731 754H782M812 709H870M812 754H870" strokeWidth="8" />
              <path d="M731 731H798M880 731H947M1020 731H1210M1210 731H1318M1389 731H1460" stroke="#999" strokeWidth="9" />
              <path d="M868 706V765" strokeWidth="11" /><path d="M866 765V880" strokeWidth="9" stroke="#888" />
              <path d="M876 472V570M876 616V712" strokeWidth="13" />
              <path d="M1202 472V570M1202 616V712M1297 472V570M1297 616V712M1302 150V216M1302 262V358" strokeWidth="15" stroke="#444" />
              <path d="M1242 194V305M1242 349V459M1242 500V611M1242 654V720M1266 150V248M1266 291V401M1266 441V554M1266 597V720" strokeWidth="7" />
              <path d="M880 481Q910 484 930 495M960 511Q990 538 1014 590M1028 628Q1037 660 1041 712M1199 481Q1170 484 1150 495M1118 514Q1085 545 1065 588M1050 628Q1043 665 1041 712M1300 481Q1330 484 1348 495M1380 514Q1415 545 1435 590M1450 630Q1460 660 1464 712M1302 353Q1330 350 1355 342M1385 320Q1420 285 1437 240M1452 204Q1460 180 1461 150" strokeWidth="8" stroke="#333" />
              <path d="M1205 709H1297M1205 754H1297M1464 709H1510M1464 754H1510" strokeWidth="8" />
              <path d="M1210 706V768M1291 706V768M1464 704V765" strokeWidth="12" /><path d="M1240 716H1270" strokeWidth="16" />
            </PlanDrawing>
          </PlanRow>
        </PlanWindow>

        <Pointer>
          <Glyph width="14" height="20" viewBox="0 0 14 20"><path d="M1 1V15.5L4.5 12.5L7 18L9.5 17L7.5 11.5H12Z" fill="#fff" stroke="#555" strokeWidth="1.3" /></Glyph>
        </Pointer>
      </Viewport>
    </>
  );
}
